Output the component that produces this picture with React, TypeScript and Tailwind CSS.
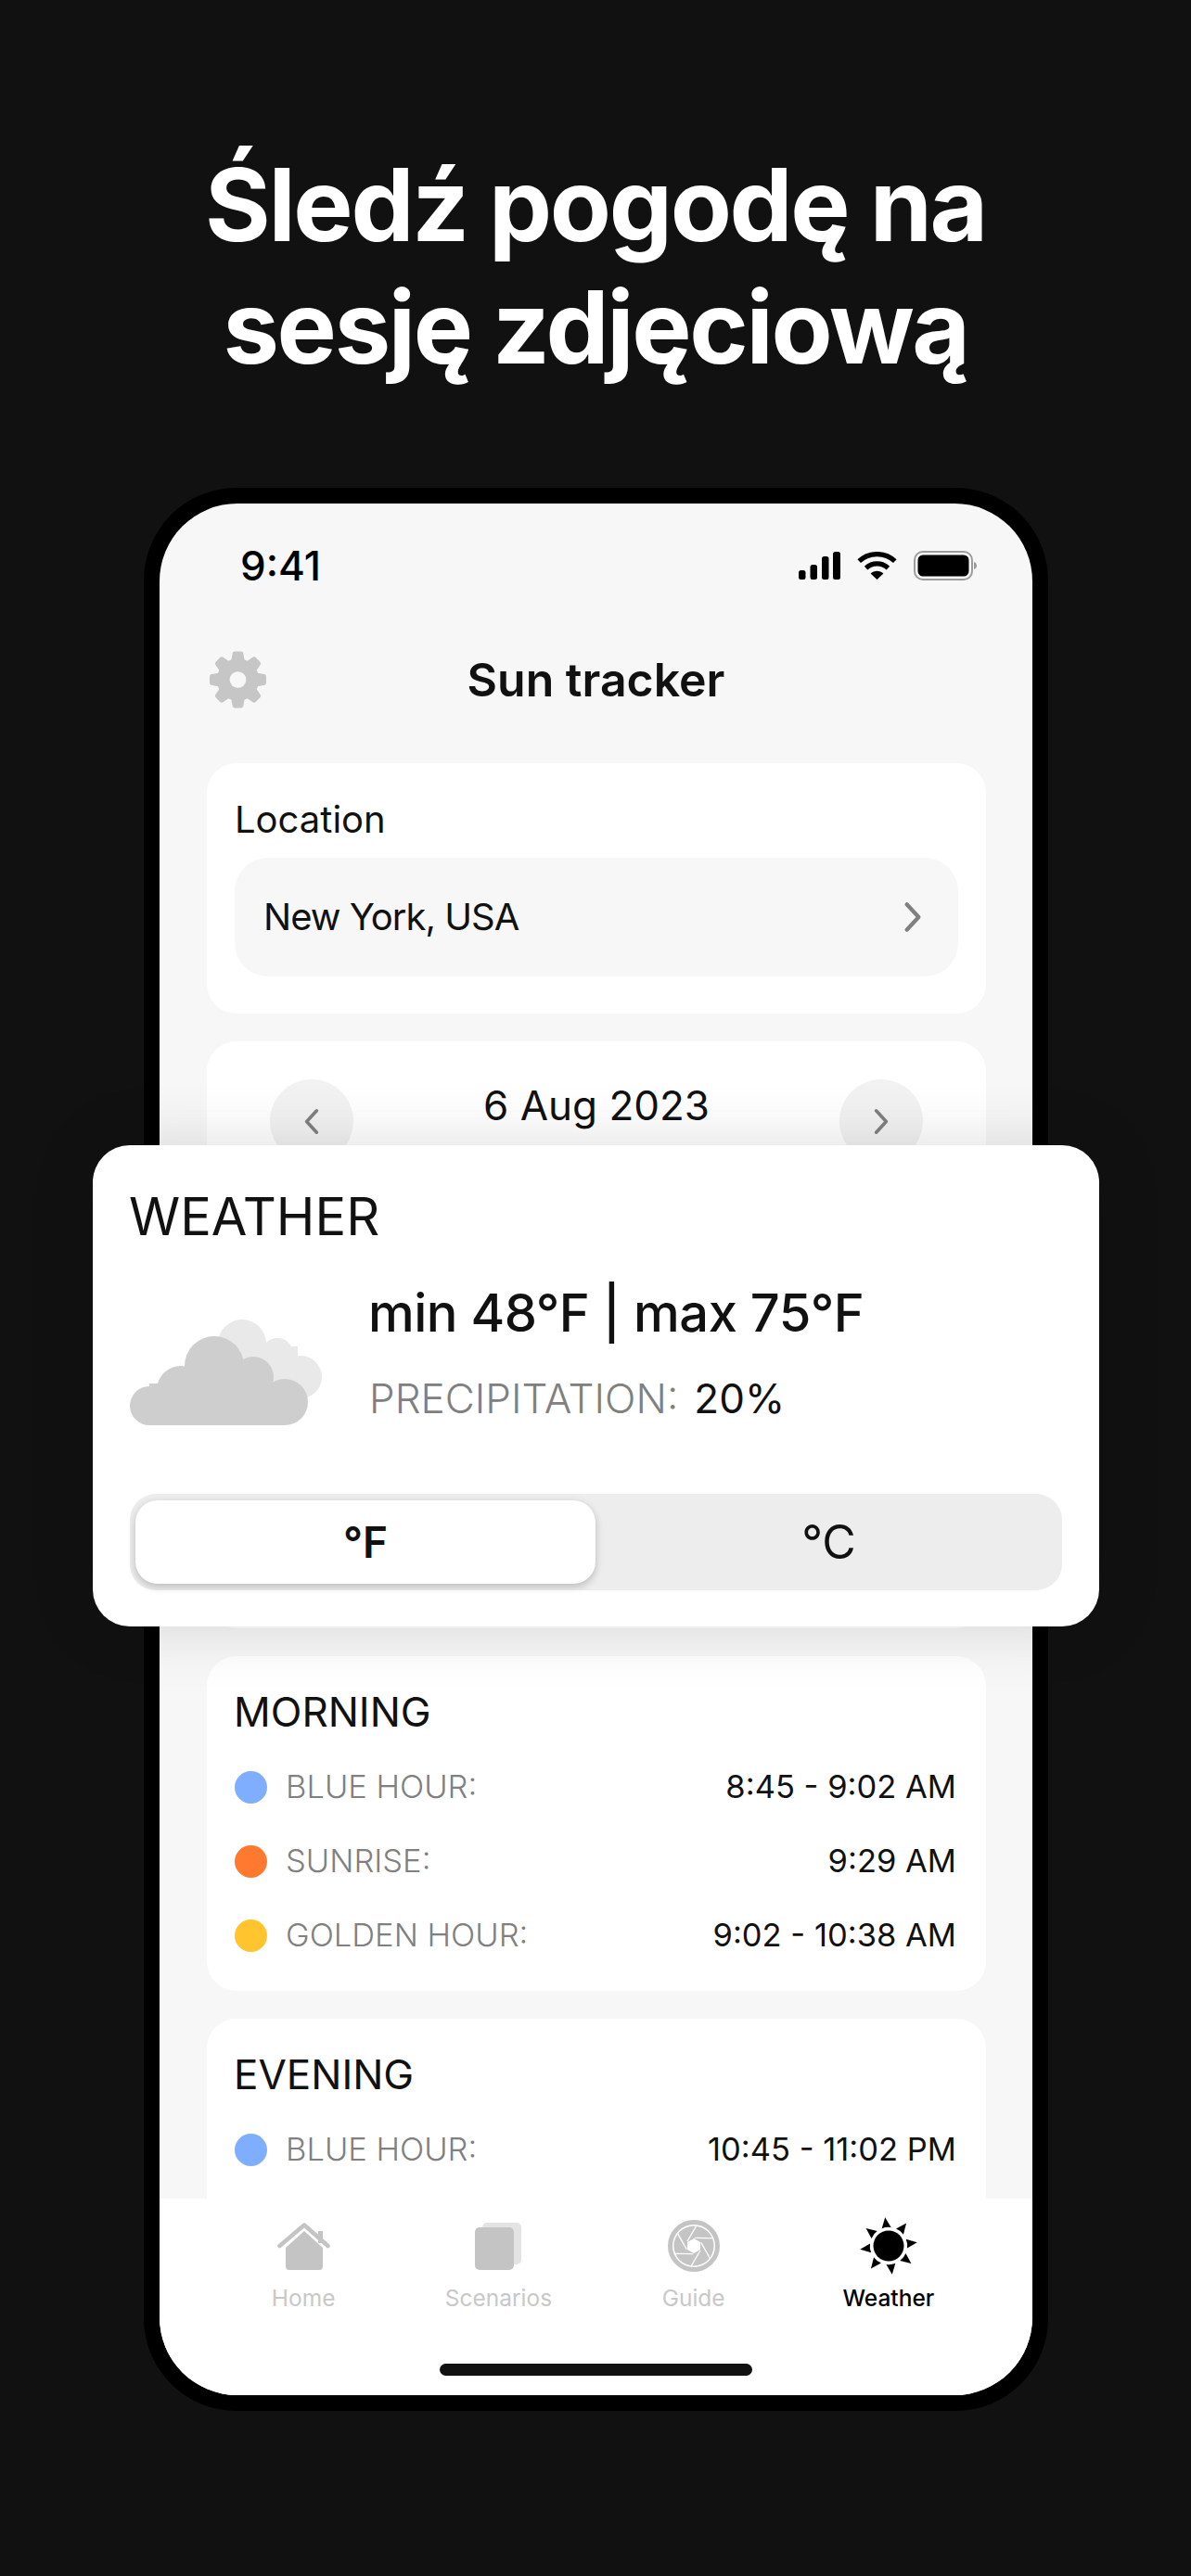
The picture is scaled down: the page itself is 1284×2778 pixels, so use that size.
const hours = {
  morning: [
    { color: 'bg-[#80aeff]', label: 'BLUE HOUR:', value: '8:45 - 9:02 AM' },
    { color: 'bg-[#ff7a2e]', label: 'SUNRISE:', value: '9:29 AM' },
    { color: 'bg-[#ffc42e]', label: 'GOLDEN HOUR:', value: '9:02 - 10:38 AM' },
  ],
  evening: [{ color: 'bg-[#80aeff]', label: 'BLUE HOUR:', value: '10:45 - 11:02 PM' }],
};

function Chevron({ left = false, className = '' }: { left?: boolean; className?: string }) {
  return (
    <svg viewBox="0 0 20 32" className={className} fill="none" stroke="#808080" strokeWidth="4" strokeLinecap="round" strokeLinejoin="round">
      <path d={left ? 'M16 3 4 16l12 13' : 'M4 3l12 13L4 29'} />
    </svg>
  );
}

function SignalIcon() {
  return (
    <svg width="45" height="30" viewBox="0 0 45 30" fill="#000">
      <rect x="0" y="20" width="7.5" height="10" rx="2.5" />
      <rect x="12.5" y="14" width="7.5" height="16" rx="2.5" />
      <rect x="25" y="5" width="7.5" height="25" rx="2.5" />
      <rect x="37" y="0" width="8" height="30" rx="2.5" />
    </svg>
  );
}

function WifiIcon() {
  return (
    <svg width="43" height="30" viewBox="0 0 43 30">
      <g fill="none" stroke="#000" strokeWidth="5.2">
        <path d="M2.2 10.2C13 0 30 0 40.8 10.2" />
        <path d="M9.6 17.6C16.400 11.400 26.600 11.400 33.400 17.600" />
      </g>
      <path d="M21.500 30 14.600 23.400C18.600 19.800 24.400 19.800 28.400 23.400Z" fill="#000" />
    </svg>
  );
}

function BatteryIcon() {
  return (
    <svg width="68" height="32" viewBox="0 0 68 32">
      <rect x="1" y="1" width="62" height="30" rx="9" fill="none" stroke="#9c9c9c" strokeWidth="2" />
      <rect x="4.500" y="4.500" width="55" height="23" rx="5.500" fill="#000" />
      <path d="M65 12c2 .6 3 2.200 3 4s-1 3.400-3 4z" fill="#9c9c9c" />
    </svg>
  );
}

function GearIcon() {
  return (
    <svg width="61" height="62" viewBox="-31 -31 62 62">
      {[0, 45, 90, 135, 180, 225, 270, 315].map((deg) => (
        <path key={deg} transform={`rotate(${deg})`} d="M-7.500 -20 L-6 -28.500 Q-5.800 -31 -3 -31 L3 -31 Q5.800 -31 6 -28.500 L7.500 -20 Z" fill="#c6c6c6" />
      ))}
      <circle r="23" fill="#c6c6c6" />
      <circle r="9" fill="#f7f7f7" />
    </svg>
  );
}

function CloudIcon() {
  return (
    <svg width="207" height="114" viewBox="19 43 207 114">
      <g fill="#e9e9e9">
        <circle cx="140" cy="69" r="26" />
        <circle cx="178" cy="80" r="17" />
        <circle cx="203" cy="105" r="23" />
        <circle cx="92" cy="112" r="23" />
        <rect x="120" y="72" width="80" height="56" />
      </g>
      <g fill="#cecece">
        <circle cx="40" cy="136" r="21" />
        <circle cx="186" cy="132" r="25" />
        <circle cx="110" cy="93" r="32" />
        <circle cx="74" cy="119" r="26" />
        <circle cx="152" cy="105" r="22" />
        <rect x="40" y="112" width="146" height="45" />
      </g>
    </svg>
  );
}

function HomeIcon() {
  return (
    <svg width="57" height="51" viewBox="0 0 57 51">
      <path d="M29 9 49 27V47a4 4 0 0 1-4 4H13a4 4 0 0 1-4-4V27Z" fill="#c4c4c4" />
      <path d="M2.500 25 29 2.500 54.500 25" fill="none" stroke="#c4c4c4" strokeWidth="4.500" strokeLinecap="round" strokeLinejoin="round" />
      <rect x="44" y="9" width="5" height="13" fill="#c4c4c4" />
    </svg>
  );
}

function ScenariosIcon() {
  return (
    <svg width="50" height="51" viewBox="0 0 50 51">
      <rect x="8" y="0" width="42" height="45" rx="5" fill="#e3e3e3" />
      <rect x="0" y="5" width="42" height="46" rx="5" fill="#c4c4c4" />
    </svg>
  );
}

function GuideIcon() {
  return (
    <svg width="56" height="56" viewBox="-28 -28 56 56">
      <circle r="25.500" fill="none" stroke="#c4c4c4" strokeWidth="5" />
      <circle r="21.500" fill="#c4c4c4" />
      {[0, 60, 120, 180, 240, 300].map((deg) => (
        <path key={deg} transform={`rotate(${deg})`} d="M-7 -5 L3 -22" stroke="#fff" strokeWidth="1.300" fill="none" />
      ))}
      <path d="M0 -8 7 -4V4L0 8-7 4V-4Z" fill="#fff" />
    </svg>
  );
}

function SunIcon() {
  return (
    <svg width="62" height="62" viewBox="-31 -31 62 62">
      <circle r="16.500" fill="#000" />
      {[0, 45, 90, 135, 180, 225, 270, 315].map((deg) => (
        <path key={deg} transform={`rotate(${deg - 7})`} d="M-5 -19.500 0 -31 5 -19.500Q0 -21 -5 -19.500Z" fill="#000" />
      ))}
    </svg>
  );
}

function HourCard({ title, rows, className = 'pb-[20px]' }: { title: string; rows: { color: string; label: string; value: string }[]; className?: string }) {
  return (
    <section className={`bg-white rounded-[32px] px-[30px] pt-[32px] shrink-0 ${className}`}>
      <h2 className="-ml-[1px] text-[44px] leading-[56px] text-[#111]">{title}</h2>
      <div className="mt-[13px]">
        {rows.map((row) => (
          <div key={row.label} className="h-[80px] flex items-center">
            <span className={`w-[35px] h-[35px] rounded-full ${row.color}`} />
            <span className="ml-[20px] text-[34.5px] font-light text-[#808080]">{row.label}</span>
            <span className="ml-auto pr-[2px] text-[34.5px] text-[#111]">{row.value}</span>
          </div>
        ))}
      </div>
    </section>
  );
}

const tabs = [
  { label: 'Home', icon: <HomeIcon /> },
  { label: 'Scenarios', icon: <ScenariosIcon /> },
  { label: 'Guide', icon: <GuideIcon /> },
  { label: 'Weather', icon: <SunIcon />, active: true },
];

export default function App() {
  return (
    <div className="w-[1284px] h-[2778px] bg-[#111] flex flex-col items-center font-['Inter',sans-serif] overflow-hidden">
      <h1 className="pt-[155px] text-center text-white text-[108px] leading-[132px] font-bold tracking-[-2.3px]">
        Śledź pogodę na
        <br />
        sesję zdjęciową
      </h1>

      {/* Phone */}
      <div className="relative mt-[107px] ml-[1px] w-[975px] h-[2074px] bg-black rounded-[100px] p-[17px]">
        <div className="w-full h-full bg-[#f7f7f7] rounded-[84px] overflow-hidden flex flex-col">
          <div className="h-[134px] shrink-0 flex items-center justify-between pl-[87px] pr-[60px]">
            <span className="text-[44px] font-medium text-black">9:41</span>
            <div className="flex items-center gap-[18px]">
              <SignalIcon />
              <WifiIcon />
              <BatteryIcon />
            </div>
          </div>

          <header className="relative h-[112px] shrink-0 flex items-center justify-center">
            <span className="absolute left-[54px] top-[25px]">
              <GearIcon />
            </span>
            <span className="text-[50px] font-semibold text-[#111]">Sun tracker</span>
          </header>

          <main className="flex-1 min-h-0 overflow-hidden pl-[51px] pr-[50px] pt-[34px] flex flex-col gap-[30px]">
            <section className="bg-white rounded-[32px] px-[30px] pt-[37px] pb-[40px] shrink-0">
              <div className="text-[40px] leading-[48px] text-[#111]">Location</div>
              <div className="mt-[17px] h-[128px] rounded-[36px] bg-[#f7f7f7] flex items-center justify-between pl-[31px] pr-[38px]">
                <span className="text-[40px] tracking-[-1px] text-[#111]">New York, USA</span>
                <Chevron className="w-[22px] h-[34px]" />
              </div>
            </section>

            <section className="bg-white rounded-[32px] h-[633px] shrink-0 px-[68px] pt-[41px] flex items-start justify-between">
              <div className="w-[90px] h-[90px] rounded-full bg-[#f2f2f2] flex items-center justify-center">
                <Chevron left className="w-[18px] h-[29px]" />
              </div>
              <span className="text-[44px] leading-[56px] text-[#111]">6 Aug 2023</span>
              <div className="w-[90px] h-[90px] rounded-full bg-[#f2f2f2] flex items-center justify-center">
                <Chevron className="w-[18px] h-[29px]" />
              </div>
            </section>

            <HourCard title="MORNING" rows={hours.morning} />
            <HourCard title="EVENING" rows={hours.evening} className="pb-[80px]" />
          </main>

          <nav className="h-[212px] shrink-0 bg-white flex flex-col">
            <div className="grid grid-cols-4 px-[50px] pt-[19px]">
              {tabs.map((tab) => (
                <div key={tab.label} className="flex flex-col items-center">
                  <div className="h-[64px] flex items-center justify-center">{tab.icon}</div>
                  <span className={`mt-[9px] text-[24.500px] leading-[30px] ${tab.active ? 'text-black font-medium' : 'text-[#c8c8c8]'}`}>
                    {tab.label}
                  </span>
                </div>
              ))}
            </div>
            <div className="mt-auto mb-[21px] self-center w-[337px] h-[13px] rounded-full bg-[#111]" />
          </nav>
        </div>

        {/* Weather card */}
        <div className="absolute left-[-55px] top-[709px] w-[1085px] h-[519px] bg-white rounded-[40px] px-[40px] pt-[42px] shadow-[0_0_70px_rgba(0,0,0,0.14)]">
          <h2 className="-ml-[1px] text-[56px] leading-[70px] text-[#111]">WEATHER</h2>
          <div className="mt-[34px] flex items-start">
            <div className="mt-[42px] shrink-0">
              <CloudIcon />
            </div>
            <div className="ml-[51px]">
              <div className="-ml-[1px] text-[56px] leading-[70px] font-medium tracking-[-0.5px] text-[#111]">min 48°F | max 75°F</div>
              <div className="mt-[27px] flex items-center text-[44px] leading-[60px]">
                <span className="font-light text-[#808080]">PRECIPITATION:</span>
                <span className="ml-[17px] text-[#111]">20%</span>
              </div>
            </div>
          </div>
          <div className="mt-[73px] h-[104px] rounded-[28px] bg-[#ededed] flex pl-[6px] py-[7px]">
            <div className="w-[496px] rounded-[24px] bg-white shadow-[0_3px_8px_rgba(0,0,0,0.22)] flex items-center justify-center text-[46px] font-semibold text-[#111]">
              °F
            </div>
            <div className="flex-1 flex items-center justify-center text-[50px] text-[#111]">°C</div>
          </div>
        </div>
      </div>
    </div>
  );
}
